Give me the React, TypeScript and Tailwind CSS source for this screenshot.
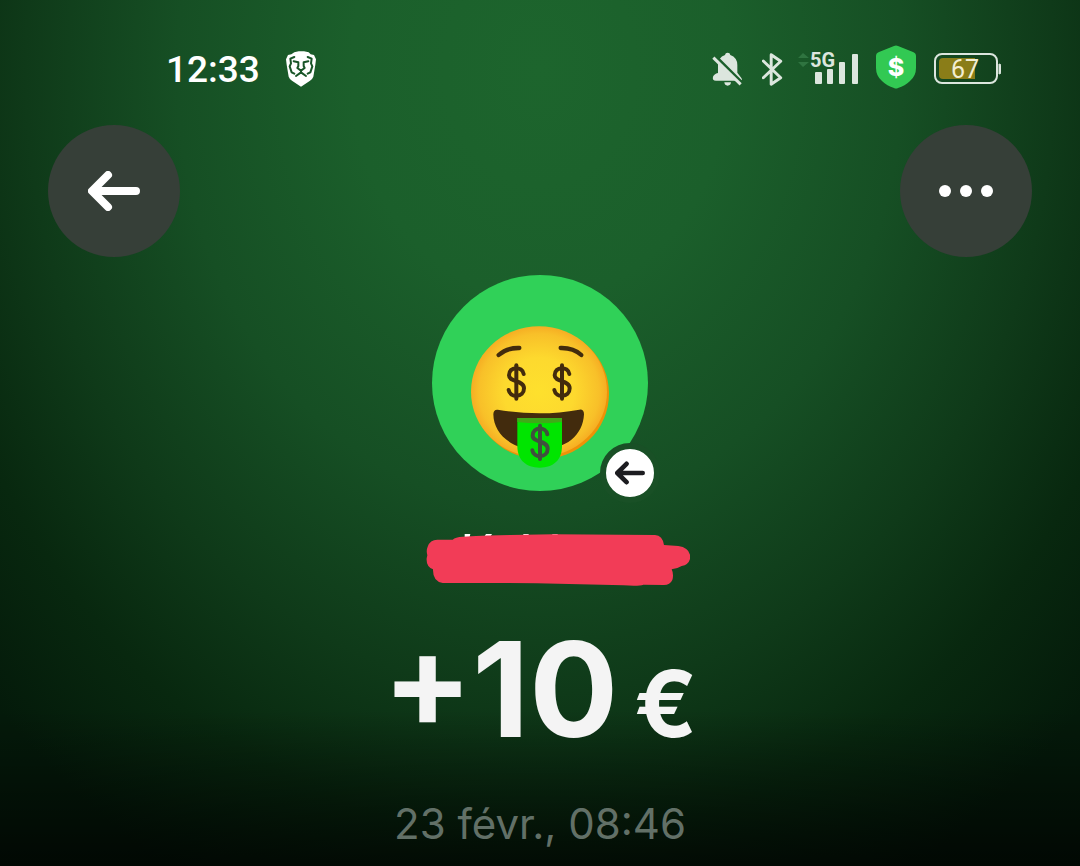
import React from "react";

function LionIcon() {
  return (
    <svg viewBox="0 0 90 106" className="h-9 w-[30px]" aria-label="Brave">
      <path
        d="M25 3 38 0H54L68 3 74 9 84 11 90 24 88 40 82 76Q79 84 72 88L45 106 18 88Q11 84 8 76L2 40 0 24 6 11 16 9Z"
        fill="#fff"
      />
      <g fill="none" stroke="#195528" strokeWidth="6" strokeLinejoin="round" strokeLinecap="round">
        <path d="M25 17 13 22 15 36 11 45 17 63 25 67" />
        <path d="M65 17 77 22 75 36 79 45 73 63 65 67" />
        <path d="M23 30 37 33V44L34 50 45 58 56 50 53 44V33L67 30" />
        <path d="M45 58V63L30 74M45 63 60 74" />
      </g>
    </svg>
  );
}

function BellOffIcon() {
  return (
    <svg viewBox="0 0 96 105" className="h-[35px] w-8" aria-label="Notifications off">
      <defs>
        <mask id="bell-cut">
          <rect width="96" height="105" fill="#fff" />
          <path d="M-2 3 98 103" stroke="#000" strokeWidth="13" />
        </mask>
      </defs>
      <g fill="#dce6de" mask="url(#bell-cut)">
        <path d="M39 9Q40 2 47 2T55 9Q76 17 76 39V62L88 78Q94 86 82 86H12Q0 86 3 74Q6 66 18 63V39Q18 17 39 9Z" />
        <path d="M37 91H57Q56 101 47 101T37 91Z" />
      </g>
      <path d="M4 17 86 97" stroke="#dce6de" strokeWidth="9" />
    </svg>
  );
}

function BluetoothIcon() {
  return (
    <svg viewBox="0 0 64 104" className="h-[35px] w-[21px]" aria-label="Bluetooth">
      <path
        d="M4 26 57 77 28 97V7L57 27 4 77"
        fill="none"
        stroke="#dce6de"
        strokeWidth="9"
        strokeLinejoin="round"
        strokeLinecap="round"
      />
    </svg>
  );
}

function SignalIcon() {
  return (
    <svg viewBox="0 0 60 40" className="h-10 w-[60px] overflow-visible" aria-label="5G signal">
      <path d="M0 9 5 4 11 9ZM0 13H11L5 18Z" fill="#2f7440" />
      <g fill="#dce6de">
        <rect x="17" y="23" width="7" height="12" rx="1" />
        <rect x="29" y="20" width="6" height="15" rx="1" />
        <rect x="41" y="13" width="6" height="22" rx="1" />
        <rect x="54" y="5" width="6" height="30" rx="1" />
      </g>
      <text x="12" y="18" fontFamily="Roboto, sans-serif" fontSize="20" fontWeight="700" fill="#dce6de">
        5G
      </text>
    </svg>
  );
}

function ShieldIcon() {
  return (
    <svg viewBox="0 0 40 44" className="-mt-1 h-11 w-10" aria-label="Secure payments">
      <path
        d="M18 1Q20 0 22 1L37 7Q40 8 40 11V23Q40 31 34 36 29 41 22 43 20 44 18 43 11 41 6 36 0 31 0 23V11Q0 8 3 7Z"
        fill="#32c953"
      />
      <text x="20" y="31" textAnchor="middle" fontFamily="Inter, sans-serif" fontSize="25" fontWeight="800" fill="#fff">
        $
      </text>
    </svg>
  );
}

function Battery() {
  return (
    <svg viewBox="0 0 67 32" className="h-8 w-[67px]" aria-label="Battery 67 percent">
      <rect x="1" y="1" width="62" height="29" rx="7" fill="none" stroke="#dce6de" strokeWidth="2" />
      <path d="M9 5H41V26H9Q5 26 5 22V9Q5 5 9 5Z" fill="#8a7d18" />
      <path d="M65 11Q67 11 67 13V19Q67 21 65 21Z" fill="#dce6de" stroke="#dce6de" />
      <text x="31" y="25" textAnchor="middle" fontFamily="Roboto, sans-serif" fontSize="25" fill="#f2eed2">
        67
      </text>
    </svg>
  );
}

function ArrowLeft({ className }: { className: string }) {
  return (
    <svg viewBox="0 0 52 40" className={className} aria-hidden="true">
      <path
        d="M20 4 4 20 20 36M5 20H48"
        fill="none"
        stroke="currentColor"
        strokeWidth="8"
        strokeLinecap="round"
        strokeLinejoin="round"
      />
    </svg>
  );
}

function Dollar({ x, y, color }: { x: number; y: number; color: string }) {
  return (
    <g transform={`translate(${x} ${y})`} fill="none" stroke={color} strokeLinecap="round">
      <path d="M0-50V50" strokeWidth="12" />
      <path d="M22-24C18-48-22-48-22-20-22 2 23-7 23 19 23 48-19 48-23 24" strokeWidth="12" />
    </g>
  );
}

function MoneyFace() {
  return (
    <svg viewBox="36 30 648 648" className="size-[216px]" role="img" aria-label="Money-mouth face">
      <defs>
        <radialGradient id="face" cx="0.5" cy="0.5" r="0.52">
          <stop offset="0" stopColor="#fee02d" />
          <stop offset="0.5" stopColor="#fdd92e" />
          <stop offset="0.85" stopColor="#f8c029" />
          <stop offset="1" stopColor="#f5a821" />
        </radialGradient>
      </defs>
      <circle cx="360" cy="354" r="324" fill="#30d158" />
      <ellipse cx="363" cy="386" rx="204" ry="197" fill="#ee9207" />
      <ellipse cx="357" cy="380" rx="204" ry="196" fill="url(#face)" />
      <g fill="none" stroke="#422b0d" strokeWidth="13" strokeLinecap="round">
        <path d="M236 270Q260 248 298 249" />
        <path d="M422 249Q460 248 484 270" />
      </g>
      <Dollar x={289} y={351} color="#422b0d" />
      <Dollar x={426} y={351} color="#422b0d" />
      <path
        d="M233 434Q360 456 478 434 492 432 492 448C489 510 440 554 356 554S221 505 220 448Q220 433 233 434Z"
        fill="#422b0d"
      />
      <path d="M292 459H426V543C426 585 400 608 359 608S292 585 292 543Z" fill="#00e500" />
      <path d="M292 459H426V471Q360 479 292 471Z" fill="#3faa18" />
      <Dollar x={360} y={532} color="#40513e" />
    </svg>
  );
}

function RedactedName() {
  return (
    <svg viewBox="-60 48 900 168" className="h-14 w-[300px]" role="img" aria-label="Name hidden">
      <path d="M164 57H181L178 70H164ZM228 57H246L238 70H220ZM340 57H356V66H340ZM427 57H443V66H427Z" fill="#fff" />
      <path
        d="M128 74Q136 66 158 65 240 61 300 60L430 58 735 60Q758 62 762 90L805 93Q840 98 841 127 838 149 815 153 800 162 785 163 792 178 787 195 780 210 762 210L700 209Q688 214 640 211L380 205 290 204H98Q68 200 69 163 48 155 50 130L52 121Q48 106 53 95 60 74 82 74Z"
        fill="#f23c57"
      />
    </svg>
  );
}

export default function App() {
  return (
    <main className="flex min-h-screen flex-col bg-[linear-gradient(to_bottom,rgba(0,0,0,0)_82%,rgba(0,0,0,0.7)_100%),radial-gradient(ellipse_70%_106%_at_50%_8%,#1d652d_0%,#1b5f2b_25%,#164f24_48%,#0f3a19_68%,#08280f_84%,#041a0a_100%)] font-['Inter',sans-serif] text-white">
      <div className="flex h-[125px] items-center justify-between pr-[79px] pb-[31px] pl-[166px] pt-11">
        <div className="flex items-center gap-[26px]">
          <time className="font-['Roboto',sans-serif] text-[37px] leading-none font-medium">12:33</time>
          <LionIcon />
        </div>
        <div className="flex items-center gap-[18px]">
          <div className="-mr-[3px] flex items-center gap-[18px]">
            <BellOffIcon />
            <BluetoothIcon />
          </div>
          <SignalIcon />
          <ShieldIcon />
          <Battery />
        </div>
      </div>

      <nav className="flex items-center justify-between px-12">
        <button
          type="button"
          aria-label="Back"
          className="flex size-[132px] items-center justify-center rounded-full bg-[#363f38]"
        >
          <ArrowLeft className="h-10 w-[52px]" />
        </button>
        <button
          type="button"
          aria-label="More options"
          className="flex size-[132px] items-center justify-center gap-[9px] rounded-full bg-[#363f38]"
        >
          <span className="size-3 rounded-full bg-white" />
          <span className="size-3 rounded-full bg-white" />
          <span className="size-3 rounded-full bg-white" />
        </button>
      </nav>

      <section className="flex flex-col items-center pt-[18px]">
        <div className="relative">
          <MoneyFace />
          <span className="absolute -right-3 -bottom-3 flex size-[60px] items-center justify-center rounded-full border-6 border-[#195026] bg-white text-[#1c1c20]">
            <ArrowLeft className="h-6 w-[30px]" />
          </span>
        </div>
        <div className="mt-10">
          <RedactedName />
        </div>
        <h1 className="mt-9 flex items-baseline gap-4 text-[132px] leading-[132px] font-bold text-[#f4f4f4]">
          <span>+10</span>
          <span className="text-[92px]">€</span>
        </h1>
        <p className="mt-6 text-[42px] leading-[60px] text-[#627067]">23 févr., 08:46</p>
      </section>
    </main>
  );
}
